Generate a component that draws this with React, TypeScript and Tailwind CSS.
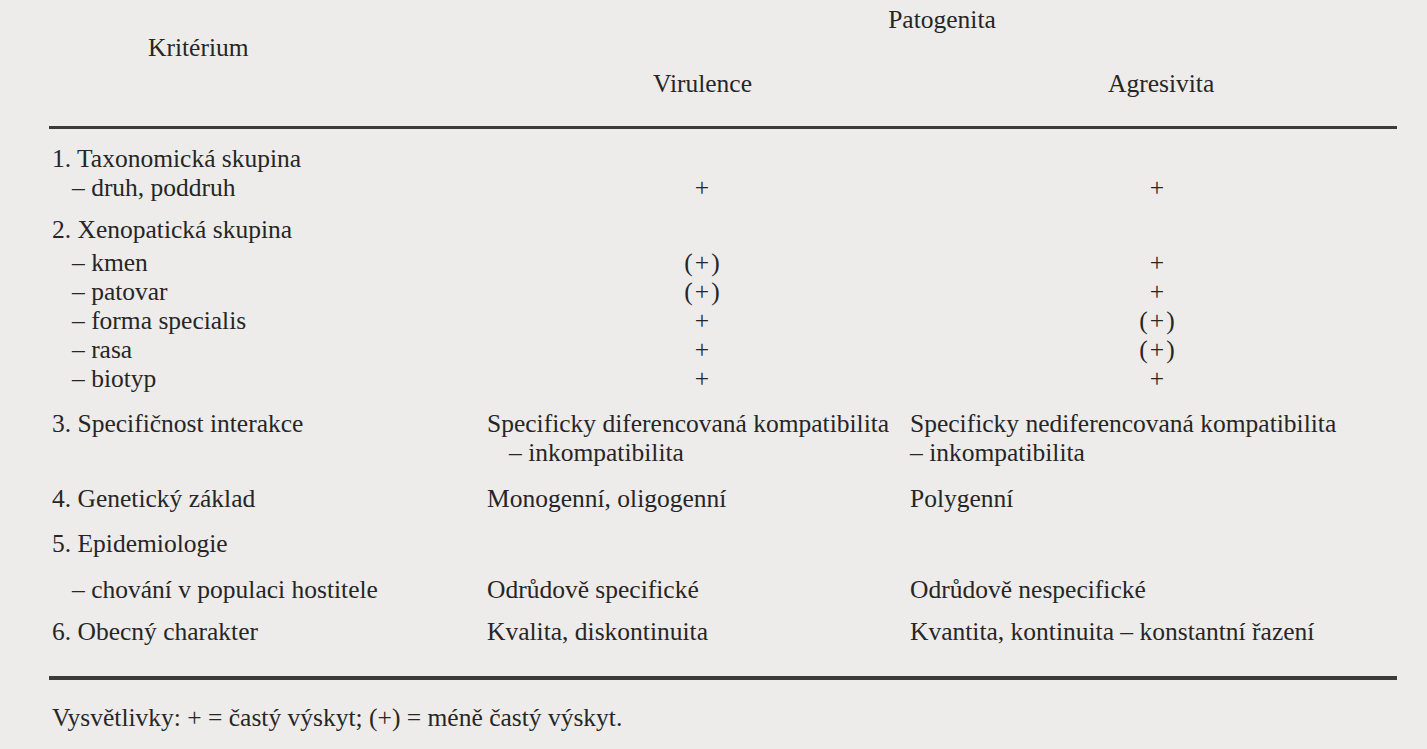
import React from 'react'

type Row = {
  label?: string
  indent?: boolean
  vir?: string
  agr?: string
  virText?: string
  virIndent?: boolean
  agrText?: string
  gap: string
}

const rows: Row[] = [
  { label: '1. Taxonomická skupina', gap: 'mt-[15px]' },
  { label: '– druh, poddruh', indent: true, vir: '+', agr: '+', gap: 'mt-0' },
  { label: '2. Xenopatická skupina', gap: 'mt-[13px]' },
  { label: '– kmen', indent: true, vir: '(+)', agr: '+', gap: 'mt-[4px]' },
  { label: '– patovar', indent: true, vir: '(+)', agr: '+', gap: 'mt-0' },
  { label: '– forma specialis', indent: true, vir: '+', agr: '(+)', gap: 'mt-0' },
  { label: '– rasa', indent: true, vir: '+', agr: '(+)', gap: 'mt-0' },
  { label: '– biotyp', indent: true, vir: '+', agr: '+', gap: 'mt-0' },
  {
    label: '3. Specifičnost interakce',
    virText: 'Specificky diferencovaná kompatibilita',
    agrText: 'Specificky nediferencovaná kompatibilita',
    gap: 'mt-[16px]',
  },
  { virText: '– inkompatibilita', virIndent: true, agrText: '– inkompatibilita', gap: 'mt-0' },
  { label: '4. Genetický základ', virText: 'Monogenní, oligogenní', agrText: 'Polygenní', gap: 'mt-[17px]' },
  { label: '5. Epidemiologie', gap: 'mt-[16px]' },
  {
    label: '– chování v populaci hostitele',
    indent: true,
    virText: 'Odrůdově specifické',
    agrText: 'Odrůdově nespecifické',
    gap: 'mt-[17px]',
  },
  {
    label: '6. Obecný charakter',
    virText: 'Kvalita, diskontinuita',
    agrText: 'Kvantita, kontinuita – konstantní řazení',
    gap: 'mt-[13px]',
  },
]

function Mark({ value }: { value?: string }) {
  if (!value) return null
  return (
    <span className="inline-flex w-[36px] justify-center">
      {value === '(+)' ? (
        <>
          <span>(</span>
          <span className="px-[2px]">+</span>
          <span>)</span>
        </>
      ) : (
        <span>+</span>
      )}
    </span>
  )
}

export default function App() {
  return (
    <div className="min-h-[749px] w-full bg-[#edecea] text-[#262626] text-[25.5px] leading-[29px] font-['Liberation_Serif','Times_New_Roman',serif]">
      <div className="ml-[49px] w-[1348px]">
        {/* hlavička */}
        <div className="grid grid-cols-[438px_423px_1fr] h-[126px]">
          <div className="pt-[33px] pl-[99px]">Kritérium</div>
          <div className="col-span-2 flex flex-col">
            <div className="pt-[5px] text-center">Patogenita</div>
            <div className="mt-[35px] grid grid-cols-[423px_1fr]">
              <div className="pl-[166px]">Virulence</div>
              <div className="pl-[198px]">Agresivita</div>
            </div>
          </div>
        </div>
        <div className="h-[3px] bg-[#3b3b3b]" />

        {/* řádky */}
        <div className="flex flex-col">
          {rows.map((r, i) => (
            <div key={i} className={`grid h-[29px] grid-cols-[438px_423px_1fr] whitespace-nowrap ${r.gap}`}>
              <div className={r.indent ? 'pl-[23px]' : 'pl-[3px]'}>{r.label}</div>
              <div>
                {r.vir && (
                  <div className="pl-[197px]">
                    <Mark value={r.vir} />
                  </div>
                )}
                {r.virText && <div className={r.virIndent ? 'pl-[22px]' : ''}>{r.virText}</div>}
              </div>
              <div>
                {r.agr && (
                  <div className="pl-[229px]">
                    <Mark value={r.agr} />
                  </div>
                )}
                {r.agrText && <div>{r.agrText}</div>}
              </div>
            </div>
          ))}
        </div>

        <div className="mt-[30px] h-[4px] bg-[#3b3b3b]" />

        <div className="mt-[23px] pl-[3px]">Vysvětlivky: + = častý výskyt; (+) = méně častý výskyt.</div>
      </div>
    </div>
  )
}
